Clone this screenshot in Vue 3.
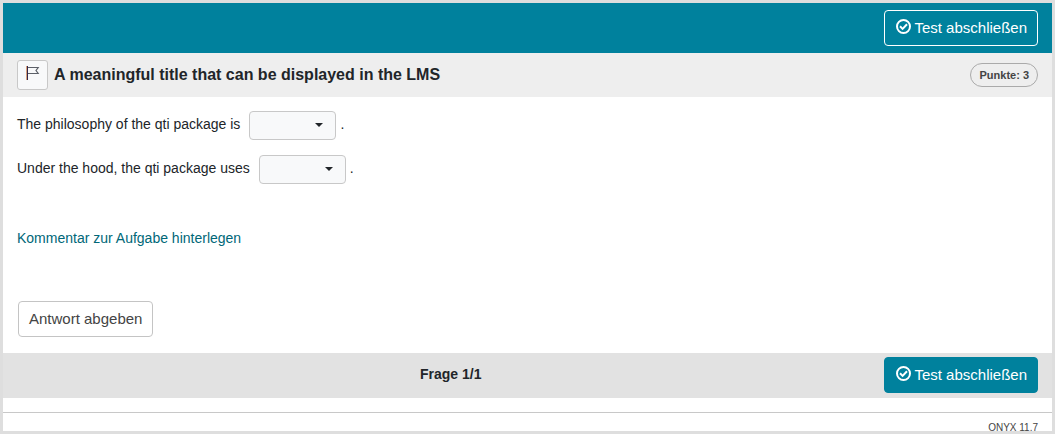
<script setup>
import { ref } from 'vue'

const philosophy = ref('')
const hood = ref('')
const philosophyOptions = ['simplicity', 'flexibility']
const hoodOptions = ['Python', 'R']
</script>

<template>
  <div class="frame">
    <header class="topbar">
      <button type="button" class="btn btn-outline">
        <svg class="check" viewBox="0 0 15 15" aria-hidden="true">
          <circle cx="7.5" cy="7.5" r="6.5" />
          <path d="M4 7.3 6.6 9.9 11 5.2" />
        </svg>
        <span>Test abschließen</span>
      </button>
    </header>

    <div class="titlebar">
      <button type="button" class="flag" aria-label="Aufgabe markieren">
        <svg viewBox="0 0 14 14" aria-hidden="true">
          <path class="pole-edge" d="M0.5 0V14" />
          <path class="pole" d="M1.5 0V14" />
          <path class="cloth" d="M2 1.5H12.2L10 4.5 12.2 7.5H2" />
        </svg>
      </button>
      <h1>A meaningful title that can be displayed in the LMS</h1>
      <span class="points">Punkte: 3</span>
    </div>

    <main class="content">
      <div class="line">
        <label for="philosophy">The philosophy of the qti package is</label>
        <span class="select">
          <select id="philosophy" v-model="philosophy">
            <option value=""></option>
            <option v-for="o in philosophyOptions" :key="o">{{ o }}</option>
          </select>
          <svg viewBox="0 0 8 4" aria-hidden="true"><path d="M0 0H8L4 4Z" /></svg>
        </span>
        <span>.</span>
      </div>
      <div class="line">
        <label for="hood">Under the hood, the qti package uses</label>
        <span class="select">
          <select id="hood" v-model="hood">
            <option value=""></option>
            <option v-for="o in hoodOptions" :key="o">{{ o }}</option>
          </select>
          <svg viewBox="0 0 8 4" aria-hidden="true"><path d="M0 0H8L4 4Z" /></svg>
        </span>
        <span>.</span>
      </div>
      <a class="comment" href="#">Kommentar zur Aufgabe hinterlegen</a>
      <button type="button" class="btn btn-plain">Antwort abgeben</button>
    </main>

    <nav class="bottombar">
      <strong>Frage 1/1</strong>
      <button type="button" class="btn btn-solid">
        <svg class="check" viewBox="0 0 15 15" aria-hidden="true">
          <circle cx="7.5" cy="7.5" r="6.5" />
          <path d="M4 7.3 6.6 9.9 11 5.2" />
        </svg>
        <span>Test abschließen</span>
      </button>
    </nav>

    <footer class="version">ONYX 11.7</footer>
  </div>
</template>

<style>
body {
  background: #fff;
}
</style>

<style scoped>
.frame {
  box-sizing: border-box;
  height: 100vh;
  overflow: hidden;
  border: 3px solid #dedede;
  background: #fff;
  color: #212529;
  font: 14px/20px "Liberation Sans", Arial, sans-serif;
}
.topbar {
  display: flex;
  justify-content: flex-end;
  padding: 7px 14px;
  background: #00819d;
}
.btn {
  display: flex;
  align-items: center;
  gap: 3px;
  box-sizing: border-box;
  height: 36px;
  padding: 0 10px;
  border: 1px solid #00819d;
  border-radius: 4px;
  font: 15px/22px "Liberation Sans", Arial, sans-serif;
  white-space: nowrap;
}
.btn-outline {
  padding: 0 10px 0 11px;
  border-color: #fff;
  background: #00819d;
  color: #fff;
}
.btn-solid {
  padding: 0 10px 0 11px;
  background: #00819d;
  color: #fff;
}
.btn-plain {
  margin-left: 1px;
  border-color: #c4c4c4;
  background: #fff;
  color: #444;
}
.check {
  width: 15px;
  height: 15px;
  margin-bottom: 3px;
  fill: none;
  stroke: currentColor;
  stroke-width: 2;
}
.titlebar {
  display: flex;
  align-items: center;
  gap: 6px;
  padding: 7px 14px;
  background: #eee;
}
.flag {
  display: flex;
  justify-content: center;
  box-sizing: border-box;
  width: 31px;
  height: 30px;
  padding: 5px 0 0;
  border: 1px solid #c8c8c8;
  border-radius: 3px;
  background: #f8f9fa;
}
.flag svg {
  width: 14px;
  height: 14px;
  fill: none;
}
.pole-edge {
  stroke: #d9a27c;
}
.pole {
  stroke: #33264a;
}
.cloth {
  stroke: #5c6068;
  stroke-width: 1.2;
}
h1 {
  flex: 1;
  margin: 0;
  font-size: 16px;
  line-height: 20px;
}
.points {
  padding: 3px 8px;
  border: 1px solid #aaa;
  border-radius: 12px;
  color: #444;
  font-size: 11px;
  font-weight: bold;
  line-height: 16px;
}
.content {
  display: flex;
  flex-direction: column;
  align-items: flex-start;
  padding: 14px 14px 16px;
}
.line {
  display: flex;
  align-items: center;
  gap: 4px;
  margin-bottom: 15px;
}
.line > label,
.line > span:last-child {
  padding-bottom: 3px;
}
.line > label {
  padding-right: 5px;
}
.select {
  position: relative;
  display: flex;
}
.select select {
  appearance: none;
  box-sizing: border-box;
  width: 87px;
  height: 29px;
  padding: 0 24px 0 8px;
  border: 1px solid #c8c8c8;
  border-radius: 4px;
  background: #f8f9fa;
  color: #212529;
  font: inherit;
}
.select svg {
  position: absolute;
  top: 12px;
  right: 13px;
  width: 8px;
  height: 4px;
  fill: #212529;
  pointer-events: none;
}
.comment {
  margin: 29px 0 53px;
  color: #006778;
  text-decoration: none;
}
.bottombar {
  display: flex;
  align-items: flex-start;
  padding: 4px 14px 5px;
  background: #e2e2e2;
}
.bottombar strong {
  flex: 1;
  padding-top: 7px;
  text-align: center;
}
.version {
  margin-top: 14px;
  padding: 8px 14px 0;
  border-top: 1px solid #c8c8c8;
  color: #444;
  font-size: 10px;
  line-height: 14px;
  text-align: right;
}
</style>
